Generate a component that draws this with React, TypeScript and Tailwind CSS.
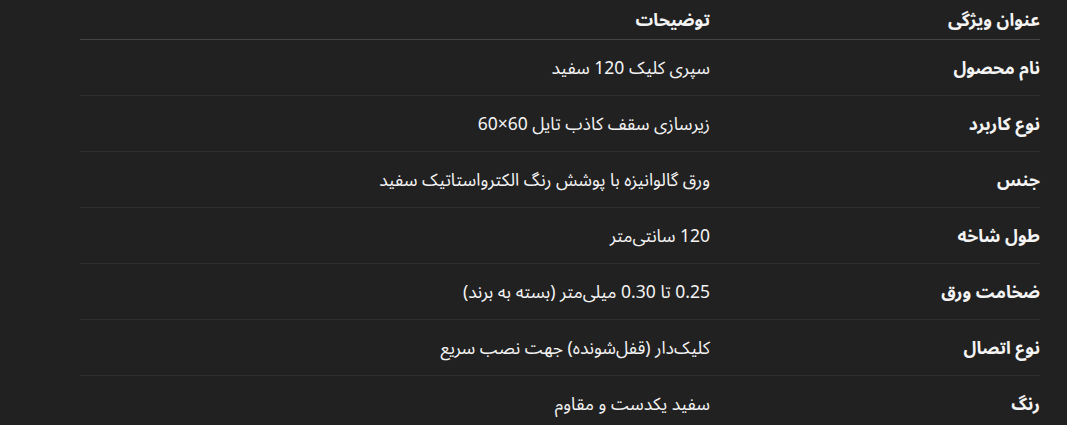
import React from "react";

const rows: [string, string][] = [
  ["نام محصول", "سپری کلیک 120 سفید"],
  ["نوع کاربرد", "زیرسازی سقف کاذب تایل 60×60"],
  ["جنس", "ورق گالوانیزه با پوشش رنگ الکترواستاتیک سفید"],
  ["طول شاخه", "120 سانتی‌متر"],
  ["ضخامت ورق", "0.25 تا 0.30 میلی‌متر (بسته به برند)"],
  ["نوع اتصال", "کلیک‌دار (قفل‌شونده) جهت نصب سریع"],
  ["رنگ", "سفید یکدست و مقاوم"],
];

export default function App() {
  return (
    <div
      className="min-h-[425px] w-full bg-[#212121] text-[#f4f4f4]"
      style={{ fontFamily: '"Noto Sans Arabic", "Noto Sans", "DejaVu Sans", sans-serif' }}
    >
      <div dir="rtl" className="ml-[80px] w-[960px]">
        <table className="w-full border-collapse text-[17.5px]">
          <thead>
            <tr className="h-[39px] border-b border-[#444444]">
              <th className="w-[330px] text-right font-bold pt-[3px]">عنوان ویژگی</th>
              <th className="text-right font-bold pt-[3px]">توضیحات</th>
            </tr>
          </thead>
          <tbody>
            {rows.map(([k, v], i) => (
              <tr key={i} className="h-[56px] border-b border-[#2e2e2e]">
                <td className="w-[330px] text-right font-bold pt-[4px]">{k}</td>
                <td className="text-right font-normal pt-[4px]">{v}</td>
              </tr>
            ))}
          </tbody>
        </table>
      </div>
    </div>
  );
}
